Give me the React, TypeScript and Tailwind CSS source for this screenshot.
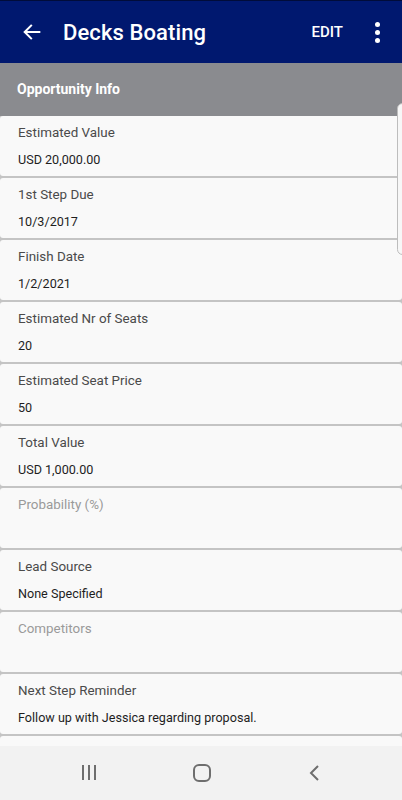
import React from "react";

const rows = [
  { label: "Estimated Value", value: "USD 20,000.00" },
  { label: "1st Step Due", value: "10/3/2017" },
  { label: "Finish Date", value: "1/2/2021" },
  { label: "Estimated Nr of Seats", value: "20" },
  { label: "Estimated Seat Price", value: "50" },
  { label: "Total Value", value: "USD 1,000.00" },
  { label: "Probability (%)", value: "" },
  { label: "Lead Source", value: "None Specified" },
  { label: "Competitors", value: "" },
  { label: "Next Step Reminder", value: "Follow up with Jessica regarding proposal." },
  { label: "Next Step", value: "" },
];

export default function App() {
  return (
    <div className="relative w-[402px] h-[800px] overflow-hidden bg-[#f9f9f9] font-['Roboto',sans-serif]">
      {/* Toolbar */}
      <header className="h-[63px] bg-[#00186f] border-t border-[#000c3a] flex items-center text-white">
        <div className="w-[63px] flex justify-center">
          <svg width="22" height="22" viewBox="0 0 24 24" fill="none" stroke="white" strokeWidth="2.2" strokeLinecap="square">
            <path d="M20 12H5M11 5l-7 7 7 7" />
          </svg>
        </div>
        <h1 className="flex-1 text-[22px] font-medium tracking-[0.1px]">Decks Boating</h1>
        <span className="text-[15px] font-medium mr-[9px]">EDIT</span>
        <div className="w-[50px] flex flex-col items-center gap-[3px]">
          <span className="w-[5px] h-[5px] rounded-full bg-white" />
          <span className="w-[5px] h-[5px] rounded-full bg-white" />
          <span className="w-[5px] h-[5px] rounded-full bg-white" />
        </div>
      </header>

      {/* Section header */}
      <div className="h-[53px] bg-[#8a8b8f] flex items-center px-[17px]">
        <span className="text-white text-[14px] font-bold">Opportunity Info</span>
      </div>

      {/* Field list */}
      <div className="bg-[#c4c4c4] flex flex-col gap-[2px]">
        {rows.map((r) => (
          <div key={r.label} className="h-[60px] bg-[#f9f9f9] rounded-[3px] px-[18px] pt-[9px]">
            <div className={"text-[13.4px] leading-[16px] " + (r.value ? "text-[#4a4a4a]" : "text-[#9a9a9a]")}>
              {r.label}
            </div>
            <div className="text-[12.6px] leading-[16px] text-[#1e1e1e] mt-[11px]">{r.value}</div>
          </div>
        ))}
      </div>

      {/* Fast scroll thumb */}
      <div className="absolute right-[-6px] top-[103px] w-[11px] h-[152px] rounded-[6px] border border-[#bdbdbd] bg-[#f7f7f7]" />

      {/* Navigation bar */}
      <nav className="absolute left-0 right-0 bottom-0 h-[54px] bg-[#f2f2f2] flex items-center justify-around px-[30px]">
        <svg width="20" height="20" viewBox="0 0 20 20" className="ml-[2px]">
          <path d="M4 2v15M10 2v15M16 2v15" stroke="#6e6e6e" strokeWidth="2" />
        </svg>
        <svg width="20" height="20" viewBox="0 0 20 20">
          <rect x="2" y="2" width="16" height="16" rx="5" fill="none" stroke="#6e6e6e" strokeWidth="2" />
        </svg>
        <svg width="20" height="20" viewBox="0 0 20 20">
          <path d="M13 3l-7 7 7 7" fill="none" stroke="#6e6e6e" strokeWidth="2" />
        </svg>
      </nav>
    </div>
  );
}
